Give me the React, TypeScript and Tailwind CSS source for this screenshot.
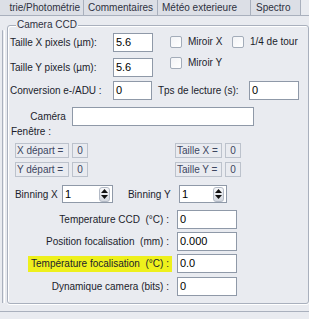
import React from 'react';

const bg = 'bg-[#e9ebf0]';
const inputCls = 'h-[19px] border border-[#8f99a8] bg-white pl-[2px] text-[11px] leading-[17px] text-black';

const Check = ({ label, className = '' }: { label: string; className?: string }) => (
  <div className={`flex items-center gap-[6px] h-[13px] ${className}`}>
    <span className="w-[12px] h-[12px] rounded-[2px] border border-[#a3acb9] bg-gradient-to-br from-[#f2f3f6] to-white" />
    <span>{label}</span>
  </div>
);

const ReadBox = ({ label, w }: { label: string; w: string }) => (
  <div className="flex items-center gap-[3px]">
    <span className={`${w} h-[15px] border border-[#bcc2cc] pl-[1px] leading-[13px] text-[#3d4660]`}>{label}</span>
    <span className="w-[16px] h-[15px] border border-[#bcc2cc] text-center leading-[13px] text-[#3d4660]">0</span>
  </div>
);

const Spinner = ({ w }: { w: string }) => (
  <div className={`${w} h-[18px] flex items-center border border-[#8f99a8] bg-white pl-[2px]`}>
    <span className="flex-1 text-[11px] text-black">1</span>
    <div className="mr-[2px] w-[11px] h-[15px] rounded-[3px] border border-[#b3bac6] bg-gradient-to-b from-[#f7f8fa] to-[#d3d7df] flex flex-col items-center justify-center gap-[2px]">
      <svg width="7" height="4" viewBox="0 0 7 4"><path d="M0 4 L3.5 0 L7 4 Z" fill="#111" /></svg>
      <svg width="7" height="4" viewBox="0 0 7 4"><path d="M0 0 L3.5 4 L7 0 Z" fill="#111" /></svg>
    </div>
  </div>
);

const TempRow = ({ label, value, mark = false, className = '' }: { label: string; value: string; mark?: boolean; className?: string }) => (
  <div className={`flex items-center pl-[2px] ${className}`}>
    <div className="w-[167px] pr-[5px] text-right">
      <span className={`inline-block h-[16px] leading-[16px] pr-[3px] pl-[3px] whitespace-pre ${mark ? 'bg-[#eef01c]' : ''}`}>{label}</span>
    </div>
    <div className={`${inputCls} w-[60px]`}>{value}</div>
  </div>
);

export default function App() {
  return (
    <div className={`w-[309px] h-[319px] overflow-hidden ${bg} font-['Liberation_Sans',Arial,sans-serif] text-[10px] text-[#1b1d2c]`}>
      {/* onglets */}
      <div className="flex h-[16px] border-b border-[#a9b0bd]">
        <div className="w-[84px] flex justify-end items-center pr-[3px] whitespace-nowrap bg-[#dcdfe6] border-r border-[#a9b0bd] text-[#2e3140]">trie/Photométrie</div>
        <div className="w-[74px] flex items-center pl-[4px] bg-[#dcdfe6] border-r border-[#a9b0bd] text-[#2e3140]">Commentaires</div>
        <div className="w-[93px] flex items-center pl-[4px] bg-[#dcdfe6] border-r border-[#a9b0bd] text-[#2e3140]">Météo exterieure</div>
        <div className="w-[50px] flex items-center pl-[5px] bg-[#dcdfe6] border-r border-[#a9b0bd] text-[#2e3140]">Spectro</div>
      </div>

      <div className="flex h-[295px]">
        <div className="ml-[2px] mt-[14px] w-[2px] h-[273px] rounded-t-[2px] border-l border-[#a9b0bd] shadow-[1px_0_0_#fff]" />
        <div className="relative ml-[3px] mt-[9px] w-[320px] h-[279px] rounded-[3px] border border-[#a9b0bd] shadow-[inset_1px_1px_0_#fff,0_1px_0_#fff]">
          <span className={`absolute left-[8px] -top-[7px] px-[1px] leading-[12px] ${bg} text-[#2e3140]`}>Camera CCD</span>

          <div className="flex pt-[7px]">
            <div className="flex flex-col gap-[6px] pl-[2px]">
              <div className="flex items-center">
                <span className="w-[103px]">Taille X pixels (µm):</span>
                <div className={`${inputCls} w-[40px]`}>5.6</div>
              </div>
              <div className="flex items-center">
                <span className="w-[103px]">Taille Y pixels (µm):</span>
                <div className={`${inputCls} w-[40px]`}>5.6</div>
              </div>
            </div>
            <div className="ml-[17px] pt-[2px] flex flex-col gap-[8px]">
              <div className="flex">
                <Check label="Miroir X" className="w-[62px]" />
                <Check label="1/4 de tour" />
              </div>
              <Check label="Miroir Y" />
            </div>
          </div>

          <div className="flex items-center mt-[4px] pl-[2px]">
            <span className="w-[103px]">Conversion e-/ADU :</span>
            <div className={`${inputCls} w-[39px]`}>0</div>
            <span className="ml-[6px] w-[91px]">Tps de lecture (s):</span>
            <div className={`${inputCls} w-[50px]`}>0</div>
          </div>

          <div className="flex items-center mt-[7px] pl-[2px]">
            <span className="w-[62px] pr-[6px] text-right">Caméra</span>
            <div className={`${inputCls} w-[182px]`} />
          </div>

          <div className="h-[12px] leading-[12px] pl-[3px]">Fenêtre :</div>

          <div className="flex mt-[5px] pl-[7px]">
            <div className="w-[160px]"><ReadBox label="X départ =" w="w-[54px]" /></div>
            <ReadBox label="Taille X =" w="w-[47px]" />
          </div>
          <div className="flex mt-[4px] pl-[7px]">
            <div className="w-[160px]"><ReadBox label="Y départ =" w="w-[54px]" /></div>
            <ReadBox label="Taille Y =" w="w-[47px]" />
          </div>

          <div className="flex items-center mt-[8px] pl-[7px]">
            <span className="w-[47px]">Binning X</span>
            <Spinner w="w-[51px]" />
            <span className="ml-[15px] w-[51px]">Binning Y</span>
            <Spinner w="w-[48px]" />
          </div>

          <TempRow className="mt-[7px]" label="Temperature CCD  (°C) :" value="0" />
          <TempRow className="mt-[3px]" label="Position focalisation  (mm) :" value="0.000" />
          <TempRow className="mt-[3px]" label="Température focalisation  (°C) :" value="0.0" mark />
          <TempRow className="mt-[4px]" label="Dynamique camera (bits) :" value="0" />
        </div>
      </div>
      <div className="border-t border-[#a9b0bd] h-[8px]" />
    </div>
  );
}
